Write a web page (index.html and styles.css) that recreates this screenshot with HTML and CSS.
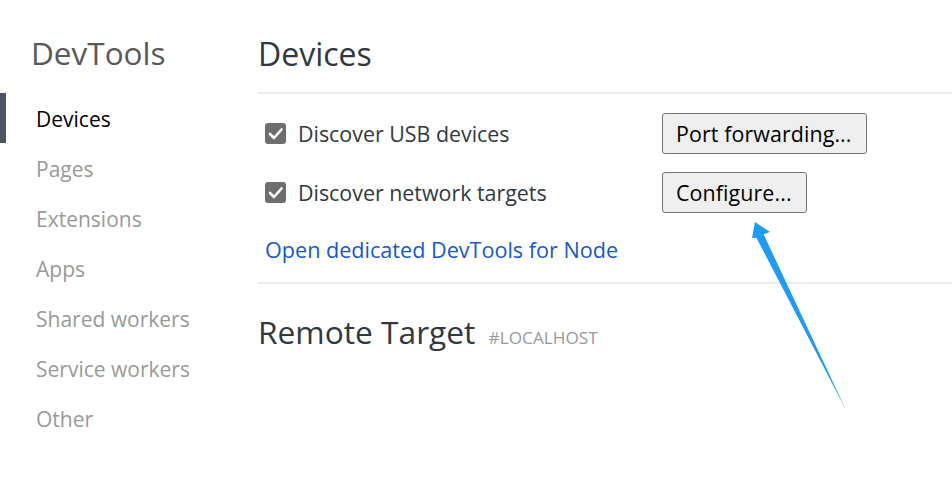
FILE: index.html
```html
<!DOCTYPE html>
<html>
<head>
<meta charset="utf-8">
<link rel="stylesheet" href="styles.css">
</head>
<body>
<div class="app">
  <nav class="sidebar">
    <div class="brand">DevTools</div>
    <ul class="nav">
      <li class="nav-item active">Devices</li>
      <li class="nav-item">Pages</li>
      <li class="nav-item">Extensions</li>
      <li class="nav-item">Apps</li>
      <li class="nav-item">Shared workers</li>
      <li class="nav-item">Service workers</li>
      <li class="nav-item">Other</li>
    </ul>
  </nav>
  <main class="main">
    <h1 class="page-title">Devices</h1>
    <section class="settings">
      <div class="row">
        <label class="check"><span class="box"><svg viewBox="0 0 21 21" width="21" height="21"><path d="M5 11 L9 15 L16.5 6.5" fill="none" stroke="#fff" stroke-width="2.6" stroke-linecap="round" stroke-linejoin="round"/></svg></span>Discover USB devices</label>
        <button class="btn">Port forwarding...</button>
      </div>
      <div class="row">
        <label class="check"><span class="box"><svg viewBox="0 0 21 21" width="21" height="21"><path d="M5 11 L9 15 L16.5 6.5" fill="none" stroke="#fff" stroke-width="2.6" stroke-linecap="round" stroke-linejoin="round"/></svg></span>Discover network targets</label>
        <button class="btn">Configure...</button>
      </div>
      <a class="link">Open dedicated DevTools for Node</a>
    </section>
    <h2 class="section-title">Remote Target <span class="tag">#LOCALHOST</span></h2>
  </main>
</div>
<svg class="arrow" width="952" height="499" viewBox="0 0 952 499">
  <polygon points="755,222 770,232 763.6,234.3 846,410 756.4,237.7 752,238" fill="#1d9bf8"/>
</svg>
</body>
</html>
```
FILE: styles.css
```css
html, body {
  margin: 0;
  padding: 0;
  background: #fff;
}
body {
  font-family: "Open Sans", "Noto Sans", sans-serif;
  color: #303942;
  width: 952px;
  height: 499px;
  overflow: hidden;
  position: relative;
}
.app {
  display: flex;
}
.sidebar {
  width: 258px;
  flex: none;
}
.brand {
  font-size: 31.5px;
  line-height: 40px;
  padding: 33px 0 0 31px;
  height: 60px;
  color: #5a5a5a;
}
.nav {
  list-style: none;
  margin: 0;
  padding: 0;
}
.nav-item {
  height: 50px;
  line-height: 52px;
  font-size: 21px;
  color: #999;
  padding-left: 36px;
  box-sizing: border-box;
}
.nav-item.active {
  color: #000;
  border-left: 6px solid #4b5460;
  padding-left: 30px;
}
.main {
  flex: 1;
}
.page-title {
  margin: 0;
  font-weight: normal;
  font-size: 32px;
  line-height: 40px;
  padding: 34px 0 18px 0;
  border-bottom: 2px solid #ececec;
}
.settings {
  padding: 19px 0 18px 7px;
  border-bottom: 2px solid #ececec;
}
.row {
  display: flex;
  align-items: center;
  height: 40px;
  margin-bottom: 19px;
}
.check {
  width: 397px;
  display: flex;
  align-items: center;
  font-size: 21.4px;
  gap: 12px;
}
.box {
  width: 21px;
  height: 21px;
  background: #6e6e6e;
  border-radius: 3px;
  display: block;
  flex: none;
}
.box svg {
  display: block;
}
.btn {
  height: 41px;
  font-family: inherit;
  font-size: 21.4px;
  color: #000;
  background: #efefef;
  border: 1px solid #767676;
  border-radius: 3px;
  padding: 0 14px 0 13px;
  letter-spacing: 0.1px;
}
.link {
  display: block;
  color: #1558d6;
  font-size: 21.6px;
  line-height: 28px;
  margin-top: 24px;
}
.section-title {
  margin: 0;
  font-weight: normal;
  font-size: 31.7px;
  line-height: 40px;
  padding: 28px 0 0 0;
}
.tag {
  font-size: 17.2px;
  color: #999;
  margin-left: 5px;
}
.arrow {
  position: absolute;
  left: 0;
  top: 0;
  pointer-events: none;
}
```
